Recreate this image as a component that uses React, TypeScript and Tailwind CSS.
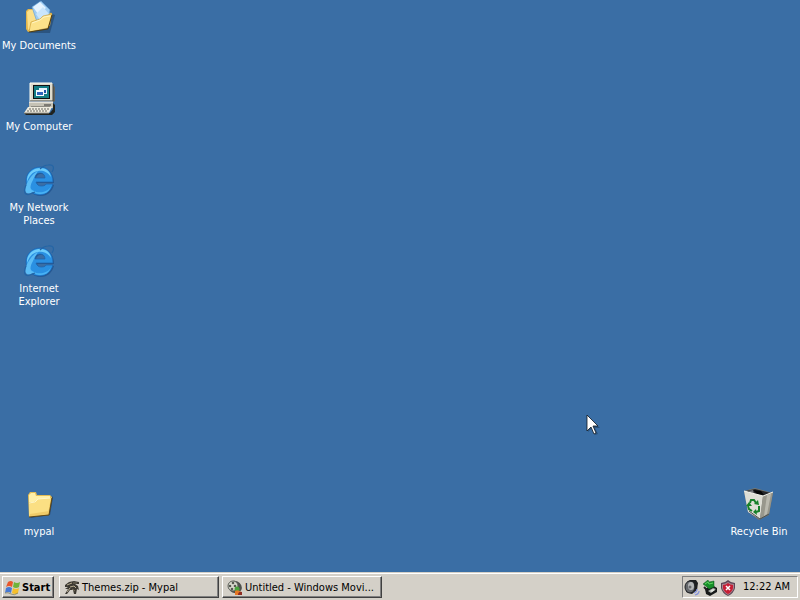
import type { ReactNode } from "react";

const raised =
  "border border-t-white border-l-white border-r-[#404040] border-b-[#404040] shadow-[inset_-1px_-1px_0_#808080]";

function DocumentsIcon() {
  return (
    <svg viewBox="0 0 32 32" className="size-8 overflow-visible" aria-hidden="true">
      <path d="M5 31 L27 31 L32 13 L29 12 Z" fill="#1f3f63" opacity=".55" />
      <path d="M3 9 L5 7 L11 7 L13 9 L29 11 L27 24 L5 30 L3 27 Z" fill="#e3b64b" />
      <path d="M4 10 L6 8 L10 8 L12 11 L14 22 L5 28 Z" fill="#fbe08a" />
      <path d="M9 5 L18 -1 L27 8 L25 17 L14 20 Z" fill="#9fcdf3" stroke="#6fa4d4" strokeWidth=".7" />
      <path d="M17 0 L23 6 L15 12 L10 5 Z" fill="#e6f4ff" />
      <path d="M13 12 L20 5 L26 12 L17 18 Z" fill="#c9e5fc" />
      <path d="M6 30 L8 20 L17 17 L20 14 L29 12 L25 26 Z" fill="#fce28a" stroke="#c99a31" strokeWidth=".6" />
      <path d="M9 21 L17 18 L21 15 L27 14" fill="none" stroke="#fff5c4" />
      <path d="M6 30 L25 27 L29 13" fill="none" stroke="#503c10" />
    </svg>
  );
}

function ComputerIcon() {
  return (
    <svg viewBox="0 0 32 32" className="size-8 overflow-visible" aria-hidden="true">
      <path d="M28 1 L32 4 V18 L29 20 Z" fill="#62625c" />
      <path d="M7 0 H29 L30 1 V18 H7 Z" fill="#dedbcd" />
      <path d="M7 18 V0 H29" fill="none" stroke="#fffef3" />
      <path d="M30 1 V18 H7" fill="none" stroke="#45453f" />
      <rect x="10" y="2" width="17" height="14" fill="#111" />
      <rect x="11" y="3" width="15" height="12" fill="#147d84" />
      <rect x="16" y="5" width="8" height="6" fill="#e9f4ff" />
      <rect x="17" y="7" width="6" height="3" fill="#2153a8" />
      <rect x="13" y="7" width="8" height="6" fill="#f7fbff" />
      <rect x="14" y="9" width="6" height="3" fill="#2f65bd" />
      <path d="M6 19 H30 V25 H6 Z" fill="#c5c2b5" />
      <path d="M6 19 H30" stroke="#fff" />
      <path d="M21 22 H28" stroke="#333" />
      <path d="M8 24 H27" stroke="#55554f" />
      <path d="M30 20 L32 22 V29 L29 32 H3 L1 30 H27 L30 26 Z" fill="#20231f" />
      <path d="M5 24 H29 L26 30 H1 Z" fill="#eeebdf" />
      <path d="M6 26 H27 M4 28 H25" stroke="#67665f" strokeDasharray="2 1" />
      <path d="M1 30 H26" stroke="#9a988e" />
    </svg>
  );
}

function ExplorerIcon() {
  return (
    <svg viewBox="0 0 32 32" className="size-8 overflow-visible" aria-hidden="true">
      <path
        d="M17 3 C25 3 30 9 30 18 H13 C14 21 16 22 18 22 C20 22 22 22 23 20 H30 C28 27 23 31 17 31 C9 31 3 25 3 17 C3 9 9 3 17 3 Z M12 14 H22 C22 11 20 9 17 9 C14 9 12 11 12 14 Z"
        fill="#15457f"
        fillRule="evenodd"
        transform="translate(1 1)"
        opacity=".55"
      />
      <path
        d="M17 3 C25 3 30 9 30 18 H13 C14 21 16 22 18 22 C20 22 22 22 23 20 H30 C28 27 23 31 17 31 C9 31 3 25 3 17 C3 9 9 3 17 3 Z M12 14 H22 C22 11 20 9 17 9 C14 9 12 11 12 14 Z"
        fill="#2a90e2"
        stroke="#1c63ad"
        strokeWidth=".7"
        fillRule="evenodd"
      />
      <path d="M4 15 C5 8 11 4 17 4 C23 4 27 7 28 13 C24 7 19 6 15 7 C9 8 6 12 4 18 Z" fill="#6dccfb" />
      <path d="M5 20 C8 28 15 29 20 28 C24 27 27 25 28 22 C26 29 21 30 16 30 C9 29 6 25 5 20 Z" fill="#49b2f4" />
      <path d="M15 7 C9 10 5 16 3 22 C1 27 3 31 8 29 L11 27 C6 27 7 21 10 16 C11 13 13 10 15 7 Z" fill="#5bbcf5" />
      <path
        d="M29 8 C32 3 30 0 25 1 C22 1 19 3 17 5 M3 21 C0 28 2 32 7 30 L12 28"
        fill="none"
        stroke="#2465a5"
        strokeWidth="1.2"
      />
    </svg>
  );
}

function FolderIcon() {
  return (
    <svg viewBox="0 0 32 32" className="size-8 overflow-visible" aria-hidden="true">
      <path d="M7 30 L27 27 L30 9 L28 8 Z" fill="#203858" opacity=".7" />
      <path d="M5 7 L7 4 L13 4 L14 7 L27 7 L29 9 L26 27 L6 29 Z" fill="#e4bd55" />
      <path d="M6 7 L8 5 L12 5 L13 8 L27 8 L27 11 L14 12 L11 14 L6 14 Z" fill="#fff0a8" />
      <path d="M6 15 L12 14 L15 11 L28 10 L25 26 L6 29 Z" fill="#fbdf83" />
      <path d="M6 15 L12 14 L15 11 L27 10" fill="none" stroke="#fff6c9" />
      <path d="M7 26 L26 23 L25 26 L6 29 Z" fill="#f0cb68" />
      <path d="M6 29 L26 27 L29 10" fill="none" stroke="#5d4719" />
    </svg>
  );
}

function RecycleIcon() {
  return (
    <svg viewBox="0 0 32 32" className="size-8 overflow-visible" aria-hidden="true">
      <path d="M1 3 L12 0 L30 5 L26 27 L16 32 L5 24 Z" fill="#77776f" />
      <path d="M3 3 L12 1 L28 5 L19 9 Z" fill="#25272a" />
      <path d="M10 2 L18 3 L21 7 L14 6 Z" fill="#050607" />
      <path d="M5 3 L10 2 L11 6 Z" fill="#74777b" />
      <path d="M1 3 L20 8 L17 31 L5 24 Z" fill="#deded5" />
      <path d="M20 8 L30 4 L26 26 L17 31 Z" fill="#98978c" />
      <path d="M24 7 L28 6 L24 26 L21 28 Z" fill="#bab9ae" />
      <path d="M1 3 L20 8 L30 4" fill="none" stroke="#f4f4ec" />
      <path d="M6 23 L17 31 L26 26" fill="none" stroke="#4b5153" />
      <g fill="none" stroke="#178029" strokeWidth="2">
        <path d="M7 15 L8 12 L11 12 L13 15" />
        <path d="M5 18 L6 21 L9 23" />
        <path d="M16 18 L16 23 L13 24" />
      </g>
      <path d="M11 16 L16 17 L15 12 Z M3 18 L6 14 L9 18 Z M13 21 L10 24 L14 27 Z" fill="#178029" />
    </svg>
  );
}

function WindowsFlag() {
  return (
    <svg viewBox="0 0 16 16" className="size-4 shrink-0" aria-hidden="true">
      <path d="M4 2 Q7 0 9 2 L8 7 Q5 5 2 7 Z" fill="#e9572c" />
      <path d="M10 2 Q13 4 16 2 L15 7 Q12 9 9 7 Z" fill="#70b43b" />
      <path d="M2 8 Q5 6 8 8 L7 13 Q4 11 1 13 Z" fill="#4779d4" />
      <path d="M9 8 Q12 10 15 8 L14 13 Q11 15 8 13 Z" fill="#f5bf2c" />
      <path d="M1 13 Q4 12 7 14 Q10 16 14 13" fill="none" stroke="#77754d" strokeWidth=".7" />
    </svg>
  );
}

function MypalIcon() {
  return (
    <svg viewBox="0 0 16 16" className="size-4 shrink-0" aria-hidden="true">
      <path
        d="M1 5 L5 2 L10 1 L15 2 L15 4 L11 4 L14 6 L15 10 L13 9 L12 14 L10 14 L9 10 L6 10 L3 14 L1 14 L4 9 L1 9 L4 7 L1 7 Z"
        fill="#3c3932"
      />
      <path d="M3 5 L8 3 M6 7 L10 6 L12 8 M3 12 L6 8" stroke="#b8ad91" fill="none" />
      <path d="M9 3 L13 3 M8 9 L11 11" stroke="#77705d" />
    </svg>
  );
}

function MovieIcon() {
  return (
    <svg viewBox="0 0 16 16" className="size-4 shrink-0 overflow-visible" aria-hidden="true">
      <ellipse cx="8" cy="7" rx="7" ry="6" fill="#4f514d" transform="rotate(25 8 7)" />
      <ellipse cx="6" cy="6" rx="5" ry="5" fill="#d8d8ce" stroke="#60635e" />
      <g fill="#555850">
        <circle cx="6" cy="3" r="1.3" />
        <circle cx="3" cy="6" r="1.3" />
        <circle cx="8" cy="6" r="1.3" />
        <circle cx="5" cy="9" r="1.3" />
      </g>
      <circle cx="10" cy="9" r="2.5" fill="#48a23c" />
      <path d="M8 11 Q11 9 14 12 L14 15 H8 Z" fill="#e67725" />
      <path d="M11 14 Q12 11 15 12 V15 H11 Z" fill="#8e2c22" />
    </svg>
  );
}

function SpeakerIcon() {
  return (
    <svg viewBox="0 0 16 16" className="size-4" aria-hidden="true">
      <path d="M3 2 L6 0 L12 0 L14 3 L13 10 L8 14 L2 12 Z" fill="#1d1e20" />
      <ellipse cx="6" cy="7" rx="5" ry="6" fill="#65686c" stroke="#1d1f23" />
      <ellipse cx="7" cy="6" rx="3" ry="4" fill="#b4b6b8" />
      <circle cx="6" cy="7" r="1.5" fill="#67696c" />
      <path d="M10 13 Q13 12 13 9 M11 15 Q15 14 15 11" fill="none" stroke="#8391dc" strokeWidth="1.2" />
    </svg>
  );
}

function HardwareIcon() {
  return (
    <svg viewBox="0 0 16 16" className="size-4" aria-hidden="true">
      <path d="M3 9 L10 5 L15 8 V12 L8 16 L4 14 Z" fill="#171919" />
      <path d="M6 11 L11 8 L14 9 L9 13 Z" fill="#a9ada9" />
      <path d="M8 11 L11 9 L13 10 L10 12 Z" fill="#e2e5df" />
      <path d="M1 4 L6 0 L7 2 L12 1 V7 L7 9 L5 7 Z" fill="#168f28" stroke="#135820" strokeWidth=".5" />
      <path d="M3 4 L6 2 L7 4 L11 3" fill="none" stroke="#65d466" />
      <path d="M2 7 L5 10" stroke="#222" strokeWidth="2" />
    </svg>
  );
}

function ShieldIcon() {
  return (
    <svg viewBox="0 0 16 16" className="size-4" aria-hidden="true">
      <path d="M1 3 Q5 3 8 0 Q11 3 15 3 V8 Q14 13 8 16 Q2 13 1 8 Z" fill="#5c4656" />
      <path d="M2 4 Q5 4 8 2 Q11 4 14 4 V8 Q13 12 8 15 Q3 12 2 8 Z" fill="#a8848f" />
      <path d="M3 5 Q6 5 8 3 Q10 5 13 5 V8 Q12 12 8 14 Q4 12 3 8 Z" fill="#c71e35" />
      <path d="M6 6 L10 10 M10 6 L6 10" stroke="#fff" strokeWidth="1.5" />
    </svg>
  );
}

function DesktopItem({ label, className, children }: { label: string; className: string; children: ReactNode }) {
  return (
    <button
      type="button"
      className={`flex flex-col items-center gap-[5px] pt-0.5 leading-[13px] text-white ${className}`}
    >
      {children}
      <span className="whitespace-pre text-center">{label}</span>
    </button>
  );
}

function TaskButton({ label, children }: { label: string; children: ReactNode }) {
  return (
    <button type="button" className={`flex h-[22px] w-40 items-center gap-0.5 px-1 pt-0.5 whitespace-nowrap ${raised}`}>
      {children}
      {label}
    </button>
  );
}

export default function App() {
  return (
    <div className="relative flex min-h-screen flex-col bg-[#3a6ea5] font-['Tahoma','DejaVu_Sans_Condensed','DejaVu_Sans',sans-serif] text-[11px] text-black select-none">
      <main className="grid flex-1 auto-rows-[81px] grid-cols-[78px_1fr_78px] pr-0.5">
        <DesktopItem label="My Documents" className="col-start-1 row-start-1">
          <DocumentsIcon />
        </DesktopItem>
        <DesktopItem label="My Computer" className="col-start-1 row-start-2">
          <ComputerIcon />
        </DesktopItem>
        <DesktopItem label={"My Network\nPlaces"} className="col-start-1 row-start-3">
          <ExplorerIcon />
        </DesktopItem>
        <DesktopItem label={"Internet\nExplorer"} className="col-start-1 row-start-4">
          <ExplorerIcon />
        </DesktopItem>
        <DesktopItem label="mypal" className="col-start-1 row-start-7">
          <FolderIcon />
        </DesktopItem>
        <DesktopItem label="Recycle Bin" className="col-start-3 row-start-7">
          <RecycleIcon />
        </DesktopItem>
      </main>

      <footer className="sticky bottom-0 flex h-7 items-start gap-[3px] border-t border-[#d4d0c8] bg-[#d4d0c8] px-0.5 pt-[3px] shadow-[inset_0_1px_0_#fff]">
        <button
          type="button"
          className={`mr-0.5 flex h-[22px] w-[52px] items-center gap-0.5 px-px pt-0.5 font-bold ${raised}`}
        >
          <WindowsFlag />
          Start
        </button>
        <TaskButton label="Themes.zip - Mypal">
          <MypalIcon />
        </TaskButton>
        <TaskButton label="Untitled - Windows Movi...">
          <MovieIcon />
        </TaskButton>
        <div className="ml-auto flex h-[22px] w-[116px] items-center gap-0.5 border border-t-[#808080] border-r-white border-b-white border-l-[#808080] pt-px pl-px">
          <button type="button" aria-label="Volume">
            <SpeakerIcon />
          </button>
          <button type="button" aria-label="Safely Remove Hardware">
            <HardwareIcon />
          </button>
          <button type="button" aria-label="Security alerts">
            <ShieldIcon />
          </button>
          <time dateTime="00:22" className="ml-auto pr-[7px] whitespace-nowrap">
            12:22 AM
          </time>
        </div>
      </footer>

      <svg viewBox="0 0 14 22" className="pointer-events-none absolute top-[414px] left-[586px] h-[22px] w-3.5" aria-hidden="true">
        <path d="M2 2 V18 L6 14 L9 21 L12 20 L9 14 H14 Z" fill="#173553" opacity=".5" />
        <path d="M1 1 V17 L5 13 L8 20 L10 19 L7 12 H12 Z" fill="#fff" stroke="#101820" strokeWidth=".8" />
      </svg>
    </div>
  );
}
